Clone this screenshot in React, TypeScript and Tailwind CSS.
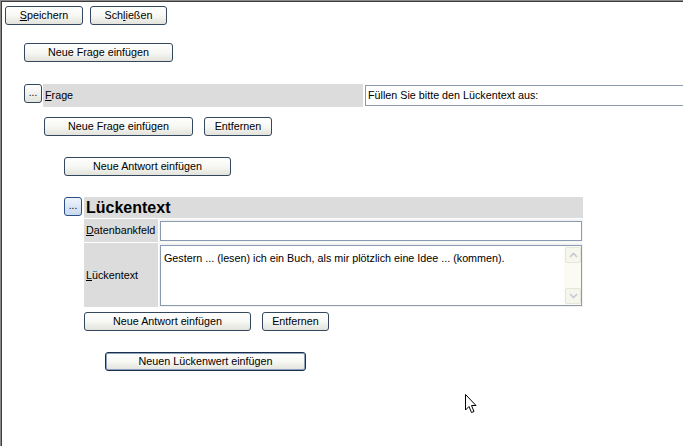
import React from "react";

function Btn({ children, w, def }: { children: React.ReactNode; w: string; def?: boolean }) {
  return (
    <button
      className={`${w} h-[19px] shrink-0 rounded-[3px] border ${
        def ? "border-[#1a2f47] shadow-[inset_0_0_0_1px_#8aa2c0]" : "border-[#33475e]"
      } bg-gradient-to-b from-white via-[#f7f7f4] to-[#e3e3dc] text-[10.75px] leading-none text-black`}
    >
      {children}
    </button>
  );
}

function DotsBtn({ blue }: { blue?: boolean }) {
  return (
    <div
      className={`flex h-[19px] w-[18px] shrink-0 items-center justify-center rounded-[3px] border text-[10px] leading-none ${
        blue
          ? "border-[#2a4f86] bg-gradient-to-b from-[#eef4fc] to-[#c9d9ef]"
          : "border-[#33475e] bg-gradient-to-b from-white to-[#e3e3dc]"
      }`}
    >
      <span className="-mt-[2px]">...</span>
    </div>
  );
}

function ScrollArrow({ up }: { up?: boolean }) {
  return (
    <div className="flex h-[16px] w-[16px] items-center justify-center rounded-[2px] border border-[#e4e6dc] bg-[#f6f6ec]">
      <svg width="9" height="6" viewBox="0 0 9 6">
        <path
          d={up ? "M1 5 L4.5 1.5 L8 5" : "M1 1 L4.5 4.5 L8 1"}
          fill="none"
          stroke="#c4cad6"
          strokeWidth="1.6"
        />
      </svg>
    </div>
  );
}

export default function App() {
  return (
    <div className="relative h-[446px] w-[683px] overflow-hidden border-l border-t border-[#8a8a8a] bg-white font-['Liberation_Sans',Arial,sans-serif] text-[10.75px] text-black">
      <div className="h-full w-full border-l border-t border-[#3c3c3c]">
        <div className="ml-[3px] mt-[4px] flex gap-[7px]">
          <Btn w="w-[78px]">
            <span className="underline">S</span>peichern
          </Btn>
          <Btn w="w-[77px]">
            Sch<span className="underline">l</span>ießen
          </Btn>
        </div>

        <div className="ml-[22px] mt-[18px] flex">
          <Btn w="w-[149px]">Neue Frage einfügen</Btn>
        </div>

        <div className="ml-[22px] mt-[22px] flex h-[23px] w-[700px] items-start">
          <DotsBtn />
          <div className="ml-[1px] flex h-[23px] w-[320px] items-center bg-[#dcdcdc] pl-[2px]">
            <span>
              <span className="underline">F</span>rage
            </span>
          </div>
          <div className="ml-[2px] mt-[1px] flex h-[21px] flex-1 items-center border border-[#8a9bb0] bg-white pl-[2px]">
            Füllen Sie bitte den Lückentext aus:
          </div>
        </div>

        <div className="ml-[42px] mt-[10px] flex gap-[11px]">
          <Btn w="w-[149px]">Neue Frage einfügen</Btn>
          <Btn w="w-[68px]">Entfernen</Btn>
        </div>

        <div className="ml-[62px] mt-[21px] flex">
          <Btn w="w-[167px]">Neue Antwort einfügen</Btn>
        </div>

        <div className="ml-[62px] mt-[21px] flex flex-col">
          <div className="flex items-start">
            <DotsBtn blue />
            <div className="ml-[2px] flex h-[21px] w-[499px] items-center bg-[#dcdcdc] pl-[2px] text-[16px] font-bold">
              Lückentext
            </div>
          </div>
          <div className="ml-[20px] mt-[1px] flex flex-col gap-[1px]">
            <div className="flex h-[23px] gap-[1px]">
              <div className="flex w-[74px] items-center bg-[#dcdcdc] pl-[2px]">
                <span>
                  <span className="underline">D</span>atenbankfeld
                </span>
              </div>
              <div className="flex w-[424px] items-center bg-[#f3f3f3] pl-[1px]">
                <div className="h-[20px] w-[422px] border border-[#8a9bb0] bg-white" />
              </div>
            </div>
            <div className="flex h-[64px] gap-[1px]">
              <div className="flex w-[74px] items-center bg-[#dcdcdc] pl-[2px]">
                <span>
                  <span className="underline">L</span>ückentext
                </span>
              </div>
              <div className="flex w-[424px] items-center bg-[#f3f3f3] pl-[1px]">
                <div className="flex h-[61px] w-[422px] border border-[#8a9bb0] bg-white">
                  <div className="flex-1 pl-[3px] pt-[4px]">
                    Gestern ... (lesen) ich ein Buch, als mir plötzlich eine Idee ... (kommen).
                  </div>
                  <div className="flex w-[17px] flex-col justify-between bg-[#fbfbf4] p-[1px]">
                    <ScrollArrow up />
                    <ScrollArrow />
                  </div>
                </div>
              </div>
            </div>
          </div>
        </div>

        <div className="ml-[82px] mt-[5px] flex gap-[11px]">
          <Btn w="w-[167px]">Neue Antwort einfügen</Btn>
          <Btn w="w-[67px]">Entfernen</Btn>
        </div>

        <div className="ml-[103px] mt-[21px] flex">
          <Btn w="w-[201px]" def>
            Neuen Lückenwert einfügen
          </Btn>
        </div>
      </div>

      <svg
        className="absolute left-[464px] top-[393px]"
        width="12"
        height="20"
        viewBox="0 0 12 20"
      >
        <path
          d="M0.5 0.5 L0.5 16 L4 12.5 L6.5 18.5 L9 17.5 L6.5 11.5 L11 11.5 Z"
          fill="white"
          stroke="black"
          strokeWidth="1"
          strokeLinejoin="miter"
        />
      </svg>
    </div>
  );
}
